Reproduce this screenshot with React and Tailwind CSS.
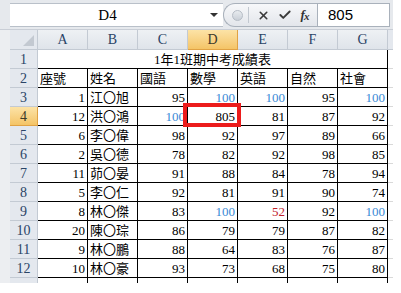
import React from "react";
import { X, Check } from "lucide-react";

const cols = ["A", "B", "C", "D", "E", "F", "G"];
const subjects = ["座號", "姓名", "國語", "數學", "英語", "自然", "社會"];
const data = [
  [1, "江〇旭", 95, 100, 100, 95, 100],
  [12, "洪〇鴻", 100, 805, 81, 87, 92],
  [6, "李〇偉", 98, 92, 97, 89, 66],
  [2, "吳〇德", 78, 82, 92, 98, 85],
  [11, "茆〇晏", 91, 88, 84, 78, 94],
  [5, "李〇仁", 92, 81, 91, 90, 74],
  [8, "林〇傑", 83, 100, 52, 92, 100],
  [20, "陳〇琮", 86, 79, 79, 87, 82],
  [9, "林〇鵬", 88, 64, 83, 76, 87],
  [10, "林〇豪", 93, 73, 68, 75, 80],
];

const numColor = (v) => {
  if (v === 100) return "text-[#3a8ad6]";
  if (v < 60) return "text-[#c0202a]";
  return "text-black";
};

const RowHead = ({ n, active }) => (
  <div
    className={
      active
        ? "w-[28px] h-[19px] flex-shrink-0 flex items-center justify-center border-b border-r border-[#e0a244] bg-gradient-to-b from-[#fce3a6] to-[#f4c466] text-[14px] text-[#3d3a2a]"
        : "w-[28px] h-[19px] flex-shrink-0 flex items-center justify-center border-b border-r border-[#c3cad3] bg-[#e4e8ee] text-[14px] text-[#2a4466]"
    }
  >
    {n}
  </div>
);

const Cell = ({ children, right, color }) => (
  <div
    className={`w-[50px] h-[19px] flex-shrink-0 flex items-end border-r border-b border-black leading-none pb-[2px] ${
      right ? "justify-end pr-[2px]" : "justify-start pl-[2px]"
    }`}
  >
    <span className={`${color || "text-black"} text-[13px]`}>{children}</span>
  </div>
);

const Tail = () => <div className="w-[5px] h-[19px] flex-shrink-0 border-b border-[#d9d9d9]" />;

export default function App() {
  return (
    <div className="relative w-[401px] h-[293px] bg-white overflow-hidden font-['Liberation_Serif','Noto_Sans_CJK_TC',serif]">
      <div className="w-[393px] bg-[#eceef1]">
        {/* formula bar */}
        <div className="h-[30px] flex items-start pt-[3px] pl-[10px] border-b border-[#c9ced6] bg-[#e6e9ed]">
          <div className="w-[213px] h-[24px] flex items-center bg-white border-y border-[#b9c0c9]">
            <div className="flex-1 text-center text-[15px] text-black">D4</div>
            <div className="w-[18px] flex justify-center">
              <div className="w-0 h-0 border-l-[4px] border-r-[4px] border-t-[4px] border-l-transparent border-r-transparent border-t-[#333]" />
            </div>
          </div>
          <div className="w-[94px] h-[24px] flex items-center rounded-l-full border border-r-0 border-[#a9b1bb] bg-gradient-to-b from-[#f7f8fa] to-[#e3e6eb]">
            <div className="w-[19px] flex justify-end">
              <div className="w-[11px] h-[11px] rounded-full border border-[#b5bcc5] bg-gradient-to-b from-[#e8ebef] to-[#c9cfd7]" />
            </div>
            <div className="w-[1px] h-[16px] ml-[5px] bg-[#c2c8d0]" />
            <div className="w-[28px] flex justify-center">
              <X size={13} strokeWidth={3} className="text-[#3a3a3a]" />
            </div>
            <div className="w-[16px] flex justify-center">
              <Check size={14} strokeWidth={3.2} className="text-[#3a3a3a]" />
            </div>
            <div className="flex-1 flex justify-center italic font-bold text-[13px] text-[#333]">
              f<span className="text-[11px] -ml-[1px] mt-[3px]">x</span>
            </div>
          </div>
          <div className="w-[73px] h-[24px] flex items-center bg-white border border-[#a9b1bb] pl-[10px] font-['Liberation_Sans',sans-serif] text-[15px] text-black">
            805
          </div>
        </div>

        {/* column headers */}
        <div className="flex pl-[10px] h-[20px]">
          <div className="relative w-[28px] h-[20px] border-r border-b border-[#c3cad3] bg-[#e4e8ee]">
            <svg className="absolute right-[3px] bottom-[3px]" width="11" height="11" viewBox="0 0 11 11">
              <polygon points="11,0 11,11 0,11" fill="#c3c9d1" />
            </svg>
          </div>
          {cols.map((c) => (
            <div
              key={c}
              className={
                c === "D"
                  ? "w-[50px] h-[20px] flex items-center justify-center border-r border-b border-[#e0a244] bg-gradient-to-b from-[#fce3a6] to-[#f4c466] text-[14px] text-[#3d3a2a]"
                  : "w-[50px] h-[20px] flex items-center justify-center border-r border-b border-[#c3cad3] bg-gradient-to-b from-[#eef1f4] to-[#dfe4ea] text-[14px] text-[#2a4466]"
              }
            >
              {c}
            </div>
          ))}
          <div className="w-[5px] h-[20px] border-b border-[#c3cad3] bg-[#e4e8ee]" />
        </div>

        {/* sheet body */}
        <div className="pl-[10px] bg-[#eceef1]">
          <div className="flex bg-white">
            <RowHead n={1} />
            <div className="w-[350px] h-[19px] flex items-end justify-center pb-[2px] border-r border-b border-black leading-none text-[13px] text-black">
              1年1班期中考成績表
            </div>
            <Tail />
          </div>
          <div className="flex bg-white">
            <RowHead n={2} />
            {subjects.map((s) => (
              <Cell key={s}>{s}</Cell>
            ))}
            <Tail />
          </div>
          {data.map((r, i) => (
            <div key={i} className="flex bg-white">
              <RowHead n={i + 3} active={i === 1} />
              <Cell right>{r[0]}</Cell>
              <Cell>{r[1]}</Cell>
              {r.slice(2).map((v, j) => (
                <Cell key={j} right color={i === 1 && j === 1 ? "text-black" : numColor(v)}>
                  {v}
                </Cell>
              ))}
              <Tail />
            </div>
          ))}
          <div className="flex bg-white h-[5px]">
            <div className="w-[28px] h-[5px] border-r border-[#c3cad3] bg-[#e4e8ee]" />
            {cols.map((c) => (
              <div key={c} className="w-[50px] h-[5px] border-r border-black" />
            ))}
          </div>
        </div>
      </div>

      {/* annotation box over D4 */}
      <div className="absolute left-[183px] top-[103px] w-[58px] h-[24px] border-4 border-[#ec1c1c]" />
    </div>
  );
}
